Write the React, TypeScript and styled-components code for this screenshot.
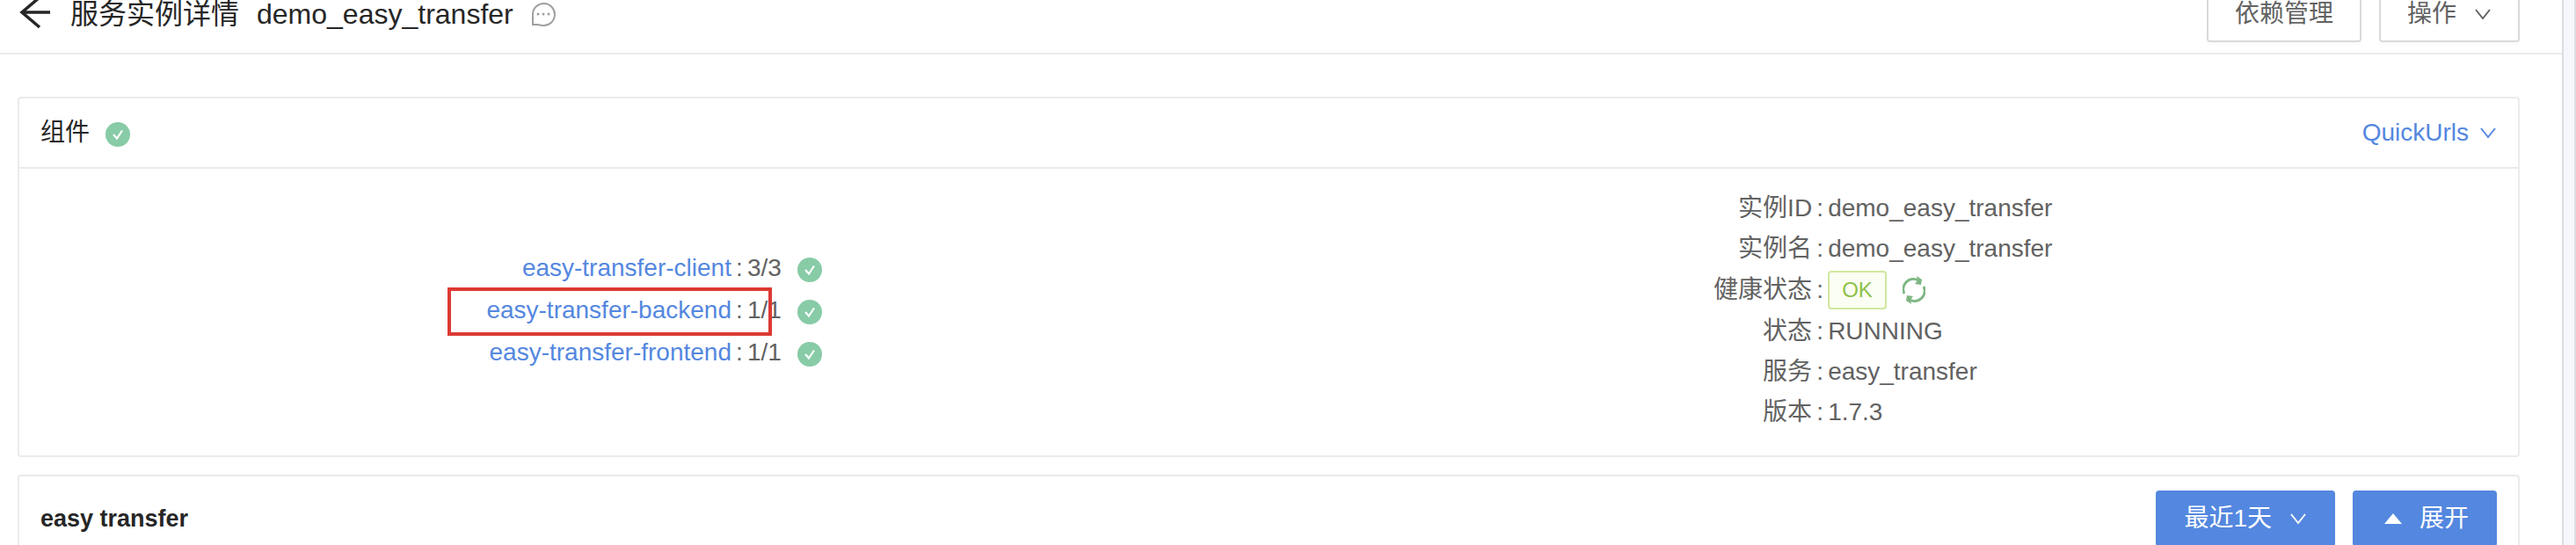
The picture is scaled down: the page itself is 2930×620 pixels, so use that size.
import React from "react";
import styled, { createGlobalStyle } from "styled-components";

const GlobalStyle = createGlobalStyle`
  * { box-sizing: border-box; }
  html, body { margin: 0; height: 100%; overflow: hidden; background: #fff; }
  body, button {
    font-family: "Liberation Sans", "Noto Sans CJK SC", sans-serif;
    font-size: 28px;
    line-height: 44px;
    color: #626262;
  }
`;

const Page = styled.div`
  display: flex;
  min-height: 100vh;
`;

const Content = styled.div`
  flex: 1;
  min-width: 0;
`;

const Gutter = styled.div`
  width: 16px;
  flex: none;
  background: #f5f7fc;
  border: solid #dcdde1;
  border-width: 0 2px;
`;

const Header = styled.header`
  display: flex;
  align-items: flex-end;
  justify-content: space-between;
  height: 62px;
  padding: 0 48px 12px 20px;
  border-bottom: 2px solid #ebebeb;
  overflow: hidden;
`;

const Heading = styled.div`
  display: flex;
  align-items: center;
  height: 64px;
  color: #262626;
`;

const IconButton = styled.button`
  display: flex;
  padding: 0;
  border: 0;
  background: none;
  cursor: pointer;
`;

const Title = styled.h1`
  display: flex;
  gap: 20px;
  margin: 0 20px;
  font-size: 32px;
  font-weight: 400;
  line-height: 32px;
`;

const Actions = styled.div`
  display: flex;
  gap: 20px;
`;

const Button = styled.button<{ $primary?: boolean }>`
  display: flex;
  align-items: center;
  gap: 20px;
  height: 64px;
  padding: 0 30px;
  border: 2px solid ${(p) => (p.$primary ? "#5487df" : "#d9d9d9")};
  border-radius: 4px;
  background: ${(p) => (p.$primary ? "#5487df" : "#fff")};
  color: ${(p) => (p.$primary ? "#fff" : "#626262")};
  box-shadow: 0 4px 0 rgba(0, 0, 0, 0.016);
  white-space: nowrap;
  cursor: pointer;
`;

const Main = styled.main`
  display: flex;
  flex-direction: column;
  gap: 20px;
  padding: 48px 48px 0 20px;
`;

const Card = styled.section`
  border: 2px solid #ebebeb;
  border-radius: 4px;
`;

const CardHead = styled.div<{ $tall?: boolean }>`
  display: flex;
  align-items: center;
  justify-content: space-between;
  height: ${(p) => (p.$tall ? 98 : 80)}px;
  padding: 0 24px;
  border-bottom: 2px solid #ebebeb;
`;

const CardTitle = styled.h2<{ $strong?: boolean }>`
  display: flex;
  align-items: center;
  margin: 0;
  font-size: ${(p) => (p.$strong ? 27 : 28)}px;
  font-weight: ${(p) => (p.$strong ? 700 : 400)};
  color: #262626;
`;

const DropdownLink = styled.a`
  display: flex;
  align-items: center;
  gap: 12px;
  color: #5487df;
  text-decoration: none;
`;

const CardBody = styled.div`
  display: grid;
  grid-template-columns: 1fr 1fr;
  align-items: center;
  padding: 22px 0 26px;
`;

const List = styled.dl`
  margin: 0;
`;

const Row = styled.div<{ $height: number }>`
  display: flex;
  align-items: center;
  height: ${(p) => p.$height}px;
`;

const Label = styled.dt<{ $share: number }>`
  position: relative;
  flex: 0 0 ${(p) => p.$share}%;
  text-align: right;

  a { color: #5487df; text-decoration: none; }
`;

const Value = styled.dd`
  display: flex;
  align-items: center;
  margin: 0;

  &::before { content: ":"; width: 18px; text-align: center; }
`;

const Highlight = styled.span`
  position: absolute;
  top: -4px;
  right: -46px;
  width: 369px;
  height: 55px;
  border: 4px solid #dc3a33;
  pointer-events: none;
`;

const StatusMark = styled.span`
  display: flex;
  padding-top: 4px;
  margin-left: 18px;
`;

const Tag = styled.span`
  height: 44px;
  padding: 0 14px;
  border: 2px solid #cfe8a0;
  border-radius: 4px;
  background: #fbfef2;
  color: #8dc149;
  font-size: 24px;
  line-height: 40px;
`;

const Refresh = styled(IconButton)`
  margin-left: 18px;
`;

const BackIcon = () => (
  <svg width="40" height="40" viewBox="0 0 40 40" fill="none" stroke="#262626" strokeWidth="3.500">
    <path d="M37 18H5M25 1 5 18l20 17" />
  </svg>
);

const CommentIcon = () => (
  <svg width="28" height="28" viewBox="0 0 28 28" fill="none" stroke="#a0a0a0" strokeWidth="2">
    <path d="M2 26V14A12.500 12.500 0 1 1 14 27q-4 0-6-1z" />
    <g fill="#a0a0a0" stroke="none">
      <circle cx="8" cy="14" r="1.500" /><circle cx="14" cy="14" r="1.500" /><circle cx="20" cy="14" r="1.500" />
    </g>
  </svg>
);

const CheckIcon = () => (
  <svg width="28" height="28" viewBox="0 0 28 28">
    <circle cx="14" cy="14" r="14" fill="#88cba7" />
    <path d="m9 14 4 4.500 6-9" fill="none" stroke="#fff" strokeWidth="2.200" />
  </svg>
);

const ChevronIcon = () => (
  <svg width="20" height="14" viewBox="0 0 20 14" fill="none" stroke="currentColor" strokeWidth="2">
    <path d="m2 2 8 10 8-10" />
  </svg>
);

const CaretUpIcon = () => (
  <svg width="24" height="12" viewBox="0 0 24 12" fill="currentColor">
    <path d="M14 0 24 12H4z" />
  </svg>
);

const RefreshIcon = () => (
  <svg width="26" height="32" viewBox="0 0 26 32" fill="none" stroke="#7fb783" strokeWidth="3">
    <path d="M2 20A11.500 11.500 0 0 1 18 5M24 12A11.500 11.500 0 0 1 8 27" />
    <path d="M16 0l6 4-1 6-7-1 3-4zM10 32l-6-4 1-6 7 1-3 4z" fill="#7fb783" stroke="none" />
  </svg>
);

const components = [
  { name: "easy-transfer-client", ready: "3/3" },
  { name: "easy-transfer-backend", ready: "1/1", highlighted: true },
  { name: "easy-transfer-frontend", ready: "1/1" },
];

const details = [
  { label: "实例ID", value: "demo_easy_transfer" },
  { label: "实例名", value: "demo_easy_transfer" },
  { label: "健康状态", value: "OK", health: true },
  { label: "状态", value: "RUNNING" },
  { label: "服务", value: "easy_transfer" },
  { label: "版本", value: "1.7.3" },
];

export default function App() {
  return (
    <>
      <GlobalStyle />
      <Page>
        <Content>
          <Header>
            <Heading>
              <IconButton aria-label="返回"><BackIcon /></IconButton>
              <Title><span>服务实例详情</span><span>demo_easy_transfer</span></Title>
              <IconButton aria-label="备注"><CommentIcon /></IconButton>
            </Heading>
            <Actions>
              <Button>依赖管理</Button>
              <Button>操作<ChevronIcon /></Button>
            </Actions>
          </Header>
          <Main>
            <Card>
              <CardHead>
                <CardTitle>组件<StatusMark><CheckIcon /></StatusMark></CardTitle>
                <DropdownLink href="#urls">QuickUrls<ChevronIcon /></DropdownLink>
              </CardHead>
              <CardBody>
                <List>
                  {components.map((c) => (
                    <Row key={c.name} $height={48}>
                      <Label $share={57}>
                        <a href={`#${c.name}`}>{c.name}</a>
                        {c.highlighted && <Highlight />}
                      </Label>
                      <Value>{c.ready}<StatusMark><CheckIcon /></StatusMark></Value>
                    </Row>
                  ))}
                </List>
                <List>
                  {details.map((d) => (
                    <Row key={d.label} $height={d.health ? 48 : 46}>
                      <Label $share={43.5}>{d.label}</Label>
                      <Value>
                        {d.health ? <Tag>{d.value}</Tag> : d.value}
                        {d.health && <Refresh aria-label="刷新"><RefreshIcon /></Refresh>}
                      </Value>
                    </Row>
                  ))}
                </List>
              </CardBody>
            </Card>
            <Card>
              <CardHead $tall>
                <CardTitle $strong>easy transfer</CardTitle>
                <Actions>
                  <Button $primary>最近1天<ChevronIcon /></Button>
                  <Button $primary><CaretUpIcon />展开</Button>
                </Actions>
              </CardHead>
            </Card>
          </Main>
        </Content>
        <Gutter />
      </Page>
    </>
  );
}
